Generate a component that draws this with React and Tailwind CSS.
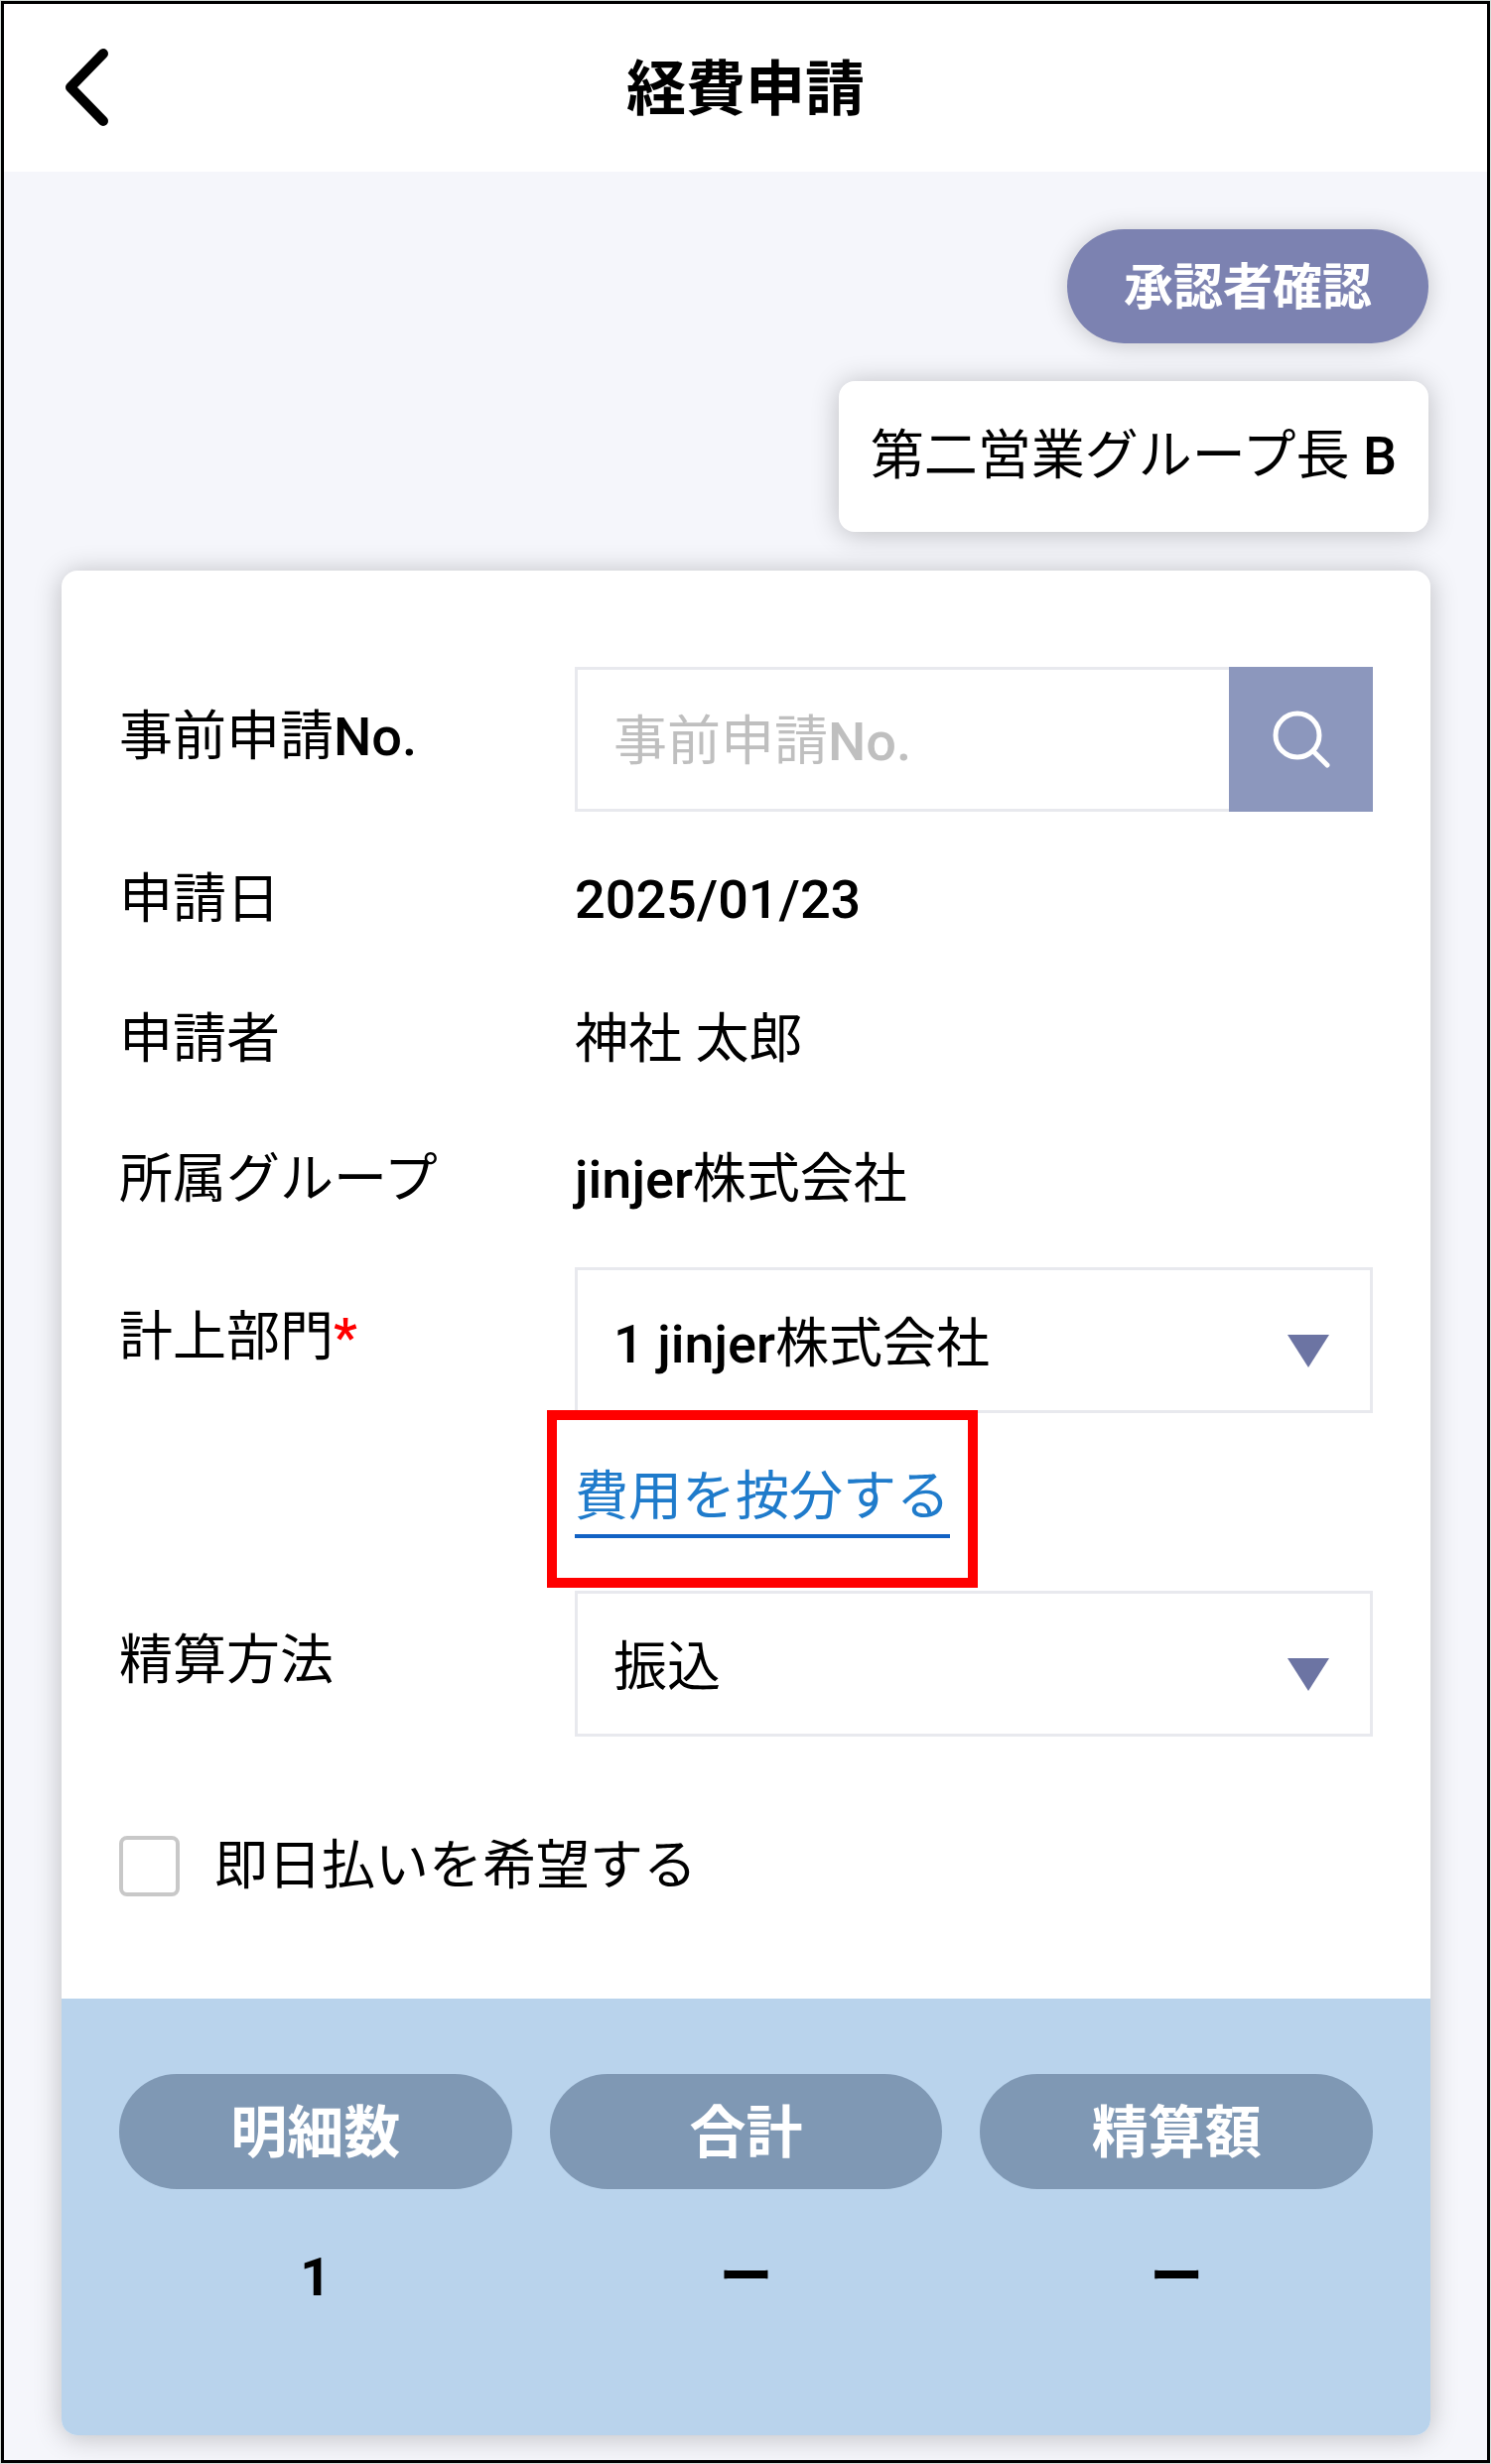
import React from "react";

const Row = ({ label, htmlFor, children }) => (
  <div className="flex">
    <label htmlFor={htmlFor} className="w-[459px] shrink-0 py-[30px]">
      {label}
    </label>
    <div className="min-w-0 flex-1">{children}</div>
  </div>
);

const InfoRow = ({ label, value }) => (
  <div className="flex py-[30px]">
    <dt className="w-[459px] shrink-0">{label}</dt>
    <dd className="flex-1">{value}</dd>
  </div>
);

const SelectBox = ({ id, options }) => (
  <div className="relative">
    <select
      id={id}
      className="block h-[147px] w-full appearance-none border-3 border-[#e8e9ee] bg-white pt-2 pl-9 pr-24"
    >
      {options.map((option) => (
        <option key={option}>{option}</option>
      ))}
    </select>
    <svg
      viewBox="0 0 42 33"
      className="pointer-events-none absolute right-11 top-[68px] h-[33px] w-[42px]"
      aria-hidden="true"
    >
      <path d="M0 0H42L21 33Z" fill="#6c74a3" />
    </svg>
  </div>
);

const summary = [
  { label: "明細数", value: "1" },
  { label: "合計", value: "ー" },
  { label: "精算額", value: "ー" },
];

const App = () => {
  return (
    <div
      lang="ja"
      className="min-h-screen border border-[#d5dcd8] font-['Roboto_Medium','Noto_Sans_CJK_JP',sans-serif] text-[54px] leading-[81px] font-normal text-black"
    >
      <div className="border-3 border-black bg-[#f5f6fb]">
        {/* Header */}
        <header className="grid grid-cols-[120px_1fr_120px] items-center bg-white pt-[39px] pb-10">
          <button type="button" aria-label="戻る" className="pl-[59px]">
            <svg viewBox="0 0 48 80" className="h-20 w-12" fill="none" aria-hidden="true">
              <path
                d="M41 6L8 40L41 74"
                stroke="#000"
                strokeWidth="10"
                strokeLinecap="round"
                strokeLinejoin="round"
              />
            </svg>
          </button>
          <h1 className="pt-1.5 text-center text-[60px] leading-[84px] font-bold">経費申請</h1>
        </header>

        <main className="pt-[58px] pr-[57px] pb-[25px] pl-[58px]">
          {/* Approver */}
          <div className="flex flex-col items-end gap-[38px] pr-0.5">
            <button
              type="button"
              className="h-[115px] w-[364px] rounded-full bg-[#7c82b1] pt-1 text-[50px] font-bold text-white shadow-[0_2px_24px_rgba(0,0,0,0.2)]"
            >
              承認者確認
            </button>
            <p className="rounded-2xl bg-white px-8 pt-[35px] pb-9 shadow-[0_2px_28px_rgba(0,0,0,0.24)]">
              第二営業グループ長 B
            </p>
          </div>

          {/* Application form */}
          <section className="mt-[39px] overflow-hidden rounded-2xl bg-white shadow-[0_2px_28px_rgba(0,0,0,0.24)]">
            <form className="px-[58px] pt-[97px] pb-[93px]">
              <Row label="事前申請No." htmlFor="request-no">
                <div className="flex">
                  <input
                    id="request-no"
                    type="text"
                    placeholder="事前申請No."
                    className="h-[146px] min-w-0 flex-1 border-3 border-r-0 border-[#e8e9ee] bg-white px-9 pt-1 placeholder:text-[#bfbfbf]"
                  />
                  <button
                    type="button"
                    aria-label="検索"
                    className="flex w-[145px] items-center justify-center bg-[#8c97bd]"
                  >
                    <svg viewBox="0 0 62 62" className="size-[62px]" fill="none" aria-hidden="true">
                      <g stroke="#fff" strokeWidth="5" strokeLinecap="round">
                        <circle cx="27" cy="27" r="22" />
                        <path d="M43 43L57 57" />
                      </g>
                    </svg>
                  </button>
                </div>
              </Row>

              <dl className="pt-[18px] pb-[18px]">
                <InfoRow label="申請日" value="2025/01/23" />
                <InfoRow label="申請者" value="神社 太郎" />
                <InfoRow label="所属グループ" value="jinjer株式会社" />
              </dl>

              <Row
                label={
                  <>
                    計上部門<span className="text-[#ff0000]">*</span>
                  </>
                }
                htmlFor="department"
              >
                <SelectBox id="department" options={["1 jinjer株式会社"]} />
                <div className="relative mt-12 mb-[53px] w-fit">
                  <a
                    href="#split"
                    className="block border-b-4 border-[#1262c4] leading-[74px] text-[#1f7bcb]"
                  >
                    費用を按分する
                  </a>
                  {/* Highlight frame */}
                  <span className="pointer-events-none absolute -inset-x-7 -top-[51px] -bottom-[50px] border-10 border-[#ff0000]"></span>
                </div>
              </Row>

              <Row label="精算方法" htmlFor="payment">
                <SelectBox id="payment" options={["振込", "現金"]} />
              </Row>

              <div className="mt-[90px] flex items-center gap-[35px]">
                <input
                  id="same-day"
                  type="checkbox"
                  className="size-[61px] appearance-none rounded-lg border-4 border-[#c8c8c8] bg-white"
                />
                <label htmlFor="same-day">即日払いを希望する</label>
              </div>
            </form>

            {/* Totals */}
            <dl className="grid grid-cols-3 gap-[38px] bg-[#b9d3ec] px-[58px] pt-[76px] pb-[119px] text-center">
              {summary.map((item) => (
                <div key={item.label}>
                  <dt className="rounded-full bg-[#7f98b4] pt-[15px] pb-[11px] text-[57px] leading-[90px] font-bold text-white">
                    {item.label}
                  </dt>
                  <dd className="mt-12 font-['Roboto','Noto_Sans_CJK_JP',sans-serif] font-bold">
                    {item.value}
                  </dd>
                </div>
              ))}
            </dl>
          </section>
        </main>
      </div>
    </div>
  );
};

export default App;
